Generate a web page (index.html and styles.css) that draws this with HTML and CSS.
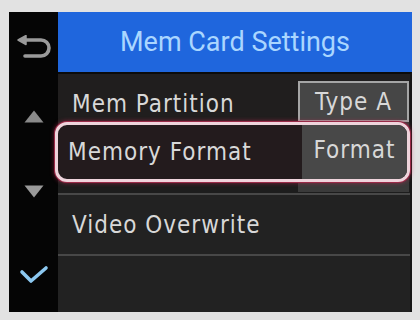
FILE: index.html
```html
<!DOCTYPE html>
<html>
<head>
<meta charset="utf-8">
<link rel="stylesheet" href="styles.css">
</head>
<body>
<div class="device">
  <aside class="side">
    <div class="cell c1">
      <svg width="34" height="24" viewBox="0 0 34 24"><path d="M5 5 H24 A8 8 0 0 1 24 21 H8" fill="none" stroke="#9a9a9a" stroke-width="3.6" stroke-linecap="round"/><path d="M1 5 L9 0.5 L9 9.5 Z" fill="#9a9a9a" stroke="#9a9a9a" stroke-width="1.5" stroke-linejoin="round"/></svg>
    </div>
    <div class="cell c2">
      <svg width="20" height="13" viewBox="0 0 20 13"><path d="M10 0.5 L19.5 12.5 H0.5 Z" fill="#8a8a8a"/></svg>
    </div>
    <div class="cell c3">
      <svg width="20" height="13" viewBox="0 0 20 13"><path d="M0.5 0.5 H19.5 L10 12.5 Z" fill="#9a9a9a"/></svg>
    </div>
    <div class="cell c4">
      <svg width="30" height="20" viewBox="0 0 30 20"><path d="M3 7 L12 16 L27 3" fill="none" stroke="#8cc8f0" stroke-width="3.6" stroke-linecap="round" stroke-linejoin="round"/></svg>
    </div>
  </aside>
  <main class="main">
    <header class="title">Mem Card Settings</header>
    <div class="list">
      <div class="row first"><span class="text">Mem Partition</span></div>
      <div class="row selected">
        <span class="label text">Memory Format</span>
        <span class="value text">Format</span>
      </div>
      <div class="gap"></div>
      <div class="row plain"><span class="text">Video Overwrite</span></div>
      <div class="row empty"></div>
      <div class="dropdown">
        <div class="option text">Type A</div>
      </div>
    </div>
  </main>
</div>
</body>
</html>
```
FILE: styles.css
```css
html, body {
  margin: 0;
  padding: 0;
}
body {
  background: #e2e2e2;
  width: 420px;
  height: 320px;
  padding: 12px 0 0 9px;
  box-sizing: border-box;
}
.device {
  width: 403px;
  height: 300px;
  display: flex;
  background: #050505;
}
.side {
  width: 49px;
  display: flex;
  flex-direction: column;
}
.cell {
  display: flex;
  align-items: center;
  justify-content: center;
}
.c1 { height: 70px; }
.c2 { height: 68px; }
.c3 { height: 82px; }
.c4 { height: 80px; padding-top: 6px; box-sizing: border-box; }

.main {
  flex: 1;
  display: flex;
  flex-direction: column;
}
.title {
  height: 60px;
  background: #1f66dd;
  color: #aad6ff;
  font-family: Roboto, sans-serif;
  font-size: 27px;
  display: flex;
  align-items: center;
  justify-content: center;
}
.list {
  position: relative;
  flex: 1;
  display: flex;
  flex-direction: column;
  background: #222222;
  border-top: 2px solid #0b0b0b;
  border-right: 2px solid #141414;
}
.text {
  font-family: "DejaVu Sans Condensed", "DejaVu Sans", sans-serif;
  font-size: 24px;
  letter-spacing: 1px;
  color: #d8d8d8;
}
.row {
  display: flex;
  align-items: center;
  box-sizing: border-box;
}
.first {
  height: 48px;
  padding: 12px 0 0 14px;
  background: #201e1e;
}
.selected {
  position: relative;
  z-index: 2;
  height: 60px;
  margin-left: -3px;
  border: 3px solid #efd4dc;
  border-radius: 12px;
  box-shadow: 0 0 0 1px #9a2a48, 0 0 4px 1px rgba(190, 40, 80, 0.6);
  background: #231b1d;
  align-items: stretch;
}
.label {
  flex: 1;
  display: flex;
  align-items: center;
  padding-left: 10px;
}
.value {
  width: 105px;
  background: #484848;
  border-radius: 0 9px 9px 0;
  display: flex;
  align-items: center;
  justify-content: center;
  padding-bottom: 5px;
  box-sizing: border-box;
}
.gap {
  height: 11px;
  background: #1d1d1d;
}
.plain {
  height: 61px;
  padding-left: 14px;
  border-top: 2px solid #484848;
}
.empty {
  flex: 1;
  border-top: 2px solid #484848;
}
.dropdown {
  position: absolute;
  z-index: 1;
  left: 240px;
  top: 7px;
  width: 111px;
  height: 111px;
  background: #3a3a3a;
}
.option {
  height: 41px;
  box-sizing: border-box;
  border: 2px solid #a5a5a5;
  background: #464646;
  display: flex;
  align-items: center;
  justify-content: center;
}
```
